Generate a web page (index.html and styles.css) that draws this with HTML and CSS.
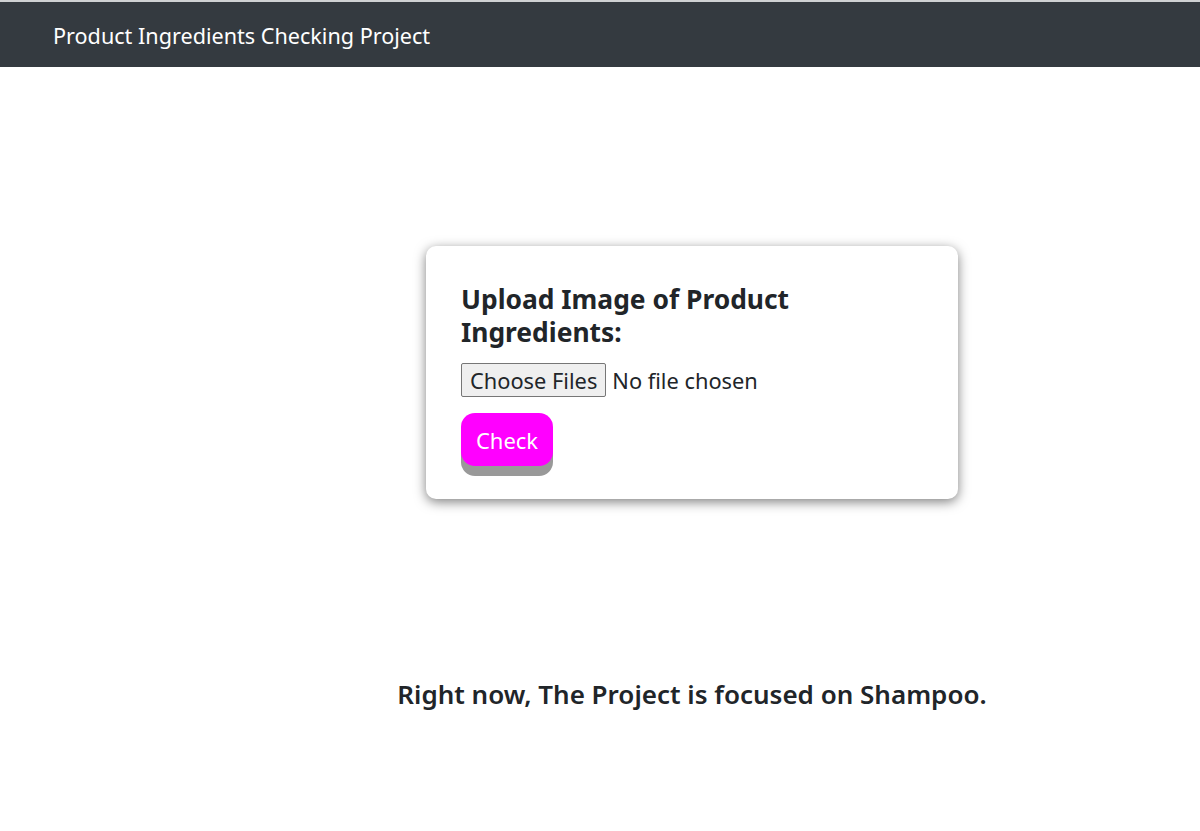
FILE: index.html
```html
<!DOCTYPE html>
<html lang="en">
<head>
<meta charset="utf-8">
<title>Product Ingredients Checking Project</title>
<link rel="stylesheet" href="styles.css">
</head>
<body>
<nav class="navbar">
  <span class="brand">Product Ingredients Checking Project</span>
</nav>
<main class="main">
  <div class="card">
    <form class="upload-form">
      <h3 class="title">Upload Image of Product<br>Ingredients:</h3>
      <input class="file-input" type="file" multiple>
      <div class="btn-row"><button type="button" class="check-btn">Check</button></div>
    </form>
  </div>
  <p class="note">Right now, The Project is focused on Shampoo.</p>
</main>
</body>
</html>
```
FILE: styles.css
```css
* { box-sizing: border-box; }
html, body { margin: 0; padding: 0; background: #fff; }
body {
  font-family: "Noto Sans", "Open Sans", sans-serif;
  color: #212529;
  border-top: 2px solid #cfd1d3;
}
.navbar {
  background: #343a40;
  height: 65px;
  display: flex;
  align-items: center;
  padding-left: 53px;
  padding-top: 3px;
}
.brand {
  color: #fff;
  font-size: 21.6px;
  line-height: 1;
}
.main {
  padding-left: 184px;
  display: flex;
  flex-direction: column;
  align-items: center;
}
.card {
  margin-top: 179px;
  width: 532px;
  height: 253px;
  background: #fff;
  border-radius: 10px;
  box-shadow: 0 3px 12px rgba(0, 0, 0, 0.5);
  padding: 37px 35px;
}
.upload-form { display: flex; flex-direction: column; align-items: flex-start; }
.title {
  margin: 0 0 14px;
  font-size: 26.4px;
  font-weight: 700;
  line-height: 33px;
}
.file-input {
  font-family: inherit;
  font-size: 21.8px;
  color: #212529;
}
.file-input::file-selector-button {
  font-family: inherit;
  font-size: 21.8px;
  color: #212529;
  background: #efefef;
  border: 1px solid #767676;
  border-radius: 2px;
  padding: 1px 8px;
  height: 34px;
  margin-right: 6px;
}
.btn-row { margin-top: 16px; }
.check-btn {
  background: #ff00ff;
  color: #fff;
  border: none;
  border-radius: 14px;
  font-family: inherit;
  font-size: 22px;
  width: 92px;
  height: 53px;
  box-shadow: 0 10px #999;
  padding: 0;
}
.note {
  margin: 177px 0 0;
  font-size: 26px;
  font-weight: 600;
}
```
